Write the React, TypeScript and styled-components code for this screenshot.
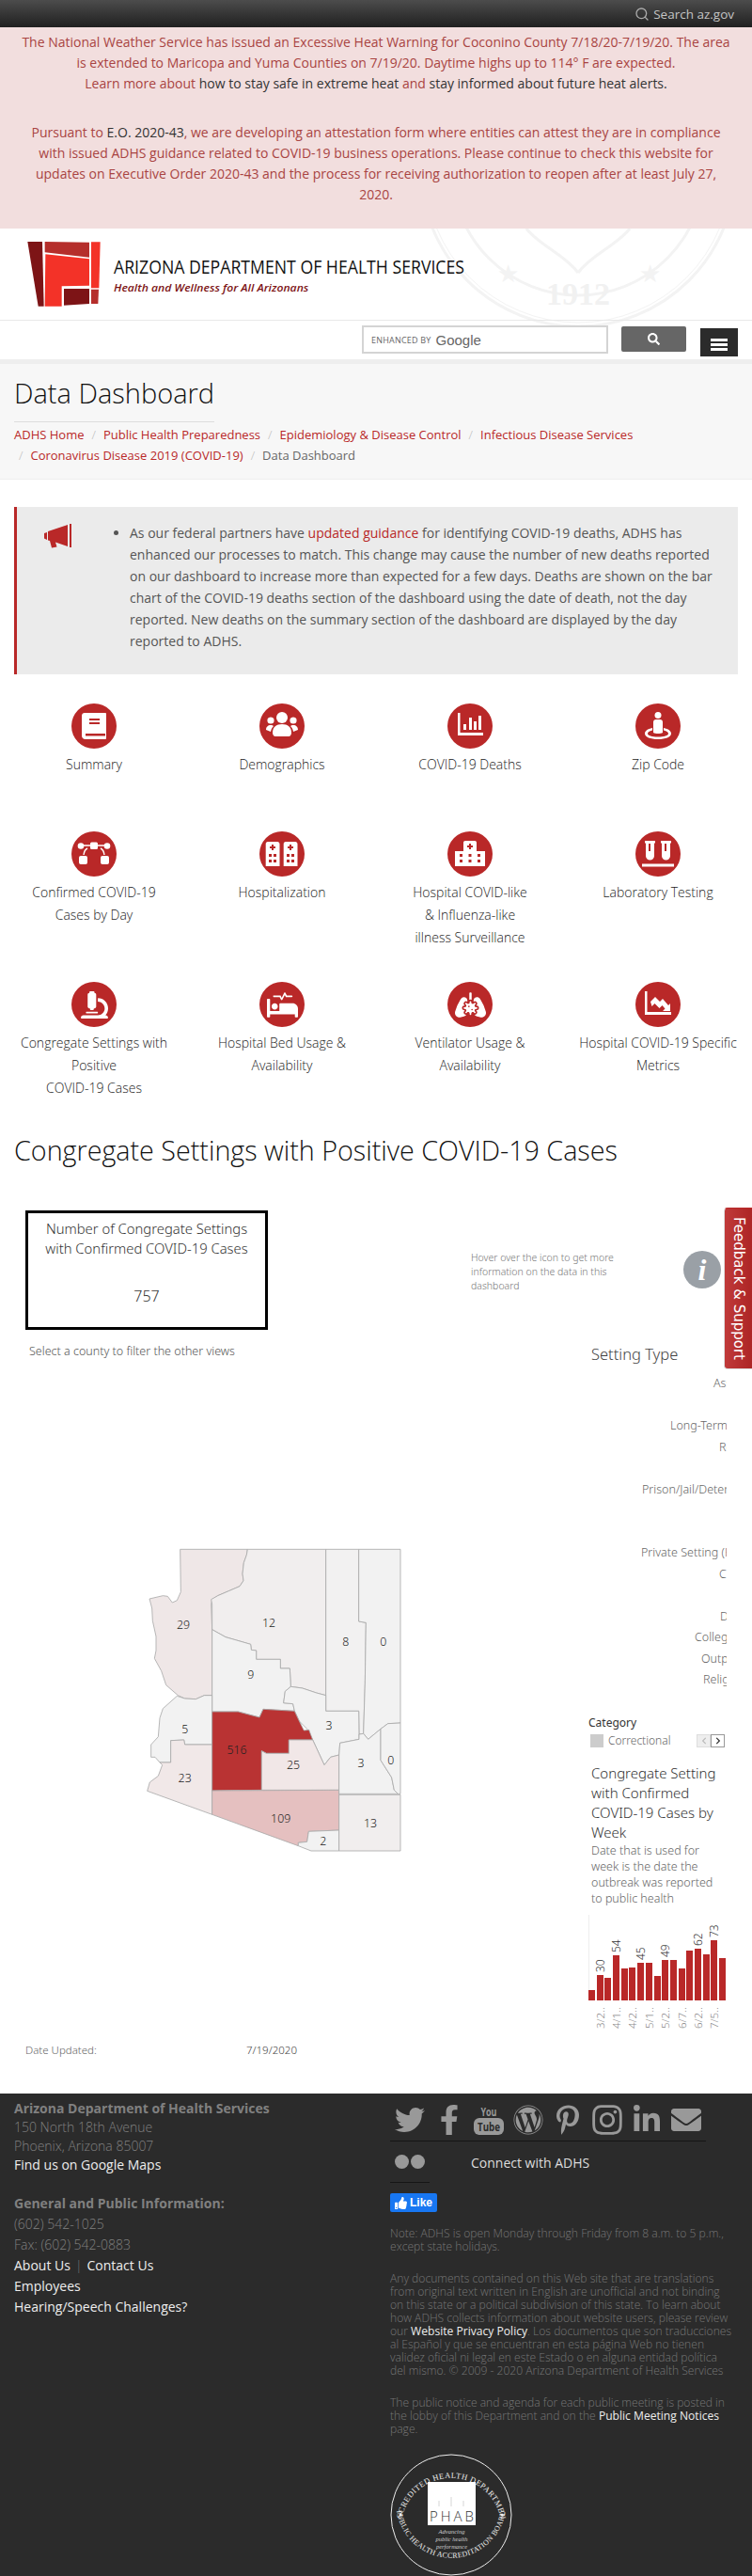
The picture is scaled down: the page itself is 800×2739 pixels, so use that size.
import React from "react";
import styled, { createGlobalStyle } from "styled-components";
import { Search } from "lucide-react";
import {
  FaMicroscope, FaProcedures, FaLungsVirus, FaSearch, FaTwitter, FaFacebookF, FaWordpress,
  FaPinterestP, FaInstagram, FaLinkedinIn, FaEnvelope, FaThumbsUp, FaChevronLeft, FaChevronRight,
} from "react-icons/fa";

const RED = "#b92828";

const GlobalStyle = createGlobalStyle`
  html, body { margin: 0; padding: 0; background: #fff; }
  body { font-family: "Open Sans", "Liberation Sans", sans-serif; color: #333; overflow-x: hidden; }
  a { color: inherit; text-decoration: none; }
`;

const Page = styled.div`
  position: relative;
  width: 800px;
  height: 2739px;
  overflow: hidden;
`;

const TopBar = styled.div`
  height: 29px;
  background: linear-gradient(#4c4c4c, #202020);
  color: #c4c4c4;
  font-size: 13.5px;
  display: flex;
  align-items: center;
  justify-content: flex-end;
  gap: 4px;
  padding-right: 19px;
`;

const AlertBox = styled.div`
  background: #f2dede;
  color: #a94442;
  font-size: 14px;
  line-height: 22px;
  text-align: center;
  white-space: nowrap;
  padding: 5px 15px 25px;
  p { margin: 0 0 30px; }
  p:last-child { margin: 0; }
  a { color: #333; }
`;

const Masthead = styled.div`
  position: relative;
  overflow: hidden;
`;

const SealMark = styled.svg`
  position: absolute;
  left: 440px;
  top: 0;
  pointer-events: none;
`;

const Brand = styled.div`
  position: relative;
  height: 97px;
  svg { display: block; }
`;

const SearchRow = styled.div`
  position: relative;
  height: 41px;
  border-top: 1px solid #e8e8e8;
  display: flex;
  justify-content: flex-end;
  padding-right: 15px;
`;

const GoogleBox = styled.div`
  width: 250px;
  height: 26px;
  margin-top: 5px;
  border: 2px solid #d4d4d4;
  background: #fff;
  display: flex;
  align-items: center;
  padding-left: 8px;
  box-sizing: content-box;
  span { font-size: 9px; color: #666; letter-spacing: 0.2px; margin-right: 5px; }
  b { font: 400 15px "Liberation Sans", sans-serif; color: #666; }
`;

const SearchButton = styled.div`
  width: 69px;
  height: 27px;
  margin: 6px 0 0 14px;
  background: #666;
  border-radius: 2px;
  color: #fff;
  display: flex;
  align-items: center;
  justify-content: center;
`;

const MenuButton = styled.div`
  width: 40px;
  height: 30px;
  margin: 8px 0 0 15px;
  background: #2b2b2b;
  display: flex;
  flex-direction: column;
  justify-content: flex-end;
  align-items: center;
  gap: 2px;
  padding-bottom: 6px;
  box-sizing: border-box;
  i { display: block; width: 18px; height: 3px; background: #fff; }
`;

const TitleBand = styled.div`
  height: 128px;
  box-sizing: border-box;
  background: #f7f7f7;
  border-top: 5px solid #eee;
  border-bottom: 1px solid #eee;
  padding: 11px 15px 0;
`;

const PageTitle = styled.h1`
  display: inline-block;
  margin: 0;
  font-size: 29px;
  font-weight: 300;
  line-height: 40px;
  color: #111;
  padding-bottom: 10px;
  border-bottom: 1px solid #ddd;
`;

const Crumbs = styled.div`
  font-size: 13px;
  line-height: 22px;
  margin-top: 2px;
  color: #666;
  a { color: ${RED}; }
  i { color: #bbb; font-style: normal; padding: 0 8px; font-weight: 300; }
  i.first { padding-left: 5px; }
`;

const Callout = styled.div`
  margin: 29px 15px 0;
  height: 178px;
  box-sizing: border-box;
  background: #ebebeb;
  border-left: 3px solid ${RED};
  padding-top: 15.5px;
  display: flex;
  color: #555;
  font-size: 14px;
  line-height: 23px;
  a { color: ${RED}; }
`;

const Horn = styled.svg`
  flex: none;
  margin: 2px 0 0 26px;
`;

const BulletList = styled.ul`
  margin: 0;
  padding: 0 0 0 62px;
  width: 621px;
  flex: none;
  box-sizing: content-box;
  li { white-space: nowrap; list-style-position: outside; }
`;

const LinkGrid = styled.div`
  display: grid;
  grid-template-columns: repeat(4, 200px);
  margin-top: 31px;
`;

const LinkItem = styled.div`
  min-height: 136px;
  padding-bottom: 35px;
  box-sizing: border-box;
  display: flex;
  flex-direction: column;
  align-items: center;
  text-align: center;
  font-size: 14px;
  font-weight: 300;
  line-height: 24px;
  color: #222;
  white-space: nowrap;
`;

const IconDisc = styled.div`
  width: 48px;
  height: 48px;
  border-radius: 50%;
  background: ${RED};
  color: #fff;
  margin-bottom: 5px;
  display: flex;
  align-items: center;
  justify-content: center;
`;

const SectionTitle = styled.h2`
  margin: 0;
  padding-left: 15px;
  font-size: 28.700px;
  font-weight: 300;
  line-height: 38px;
  color: #111;
  white-space: nowrap;
`;

const Dashboard = styled.div`
  display: grid;
  grid-template-columns: 501px 299px;
  height: 984px;
  font-family: "Noto Sans", "Open Sans", sans-serif;
  font-weight: 300;
`;

const LeftColumn = styled.div`
  padding: 45px 0 0 27px;
`;

const KpiBox = styled.div`
  width: 258px;
  height: 127px;
  box-sizing: border-box;
  border: 3.5px solid #000;
  text-align: center;
  font-size: 14.800px;
  line-height: 21px;
  color: #333;
  padding-top: 6px;
  white-space: nowrap;
  span { display: block; margin-top: 30px; font-size: 16px; }
`;

const SelectHint = styled.div`
  margin: 14px 0 0 4px;
  font-size: 12.500px;
  line-height: 18px;
  color: #555;
`;

const MapFrame = styled.svg`
  display: block;
  margin: 174px 0 0 103px;
`;

const UpdatedRow = styled.div`
  margin-top: 181px;
  display: flex;
  font-size: 11.500px;
  line-height: 18px;
  color: #666;
  span:first-child { width: 235px; }
  span:last-child { color: #444; }
`;

const RightColumn = styled.div`
  padding-top: 88px;
`;

const HoverRow = styled.div`
  height: 45px;
  display: flex;
  width: 266px;
  justify-content: space-between;
`;

const HoverNote = styled.div`
  width: 178px;
  font-size: 10.500px;
  line-height: 15px;
  color: #777;
`;

const InfoDot = styled.div`
  width: 40px;
  height: 40px;
  border-radius: 50%;
  background: #9aa0a6;
  color: #fff;
  font: italic 700 32px/40px "Liberation Serif", serif;
  text-align: center;
`;

const SidePanel = styled.div`
  margin: 53px 0 0 125px;
  width: 147px;
  overflow: hidden;
`;

const SettingTitle = styled.div`
  margin-left: 3px;
  font-size: 16.500px;
  line-height: 24px;
  color: #444;
`;

const SettingList = styled.div`
  margin-top: 8px;
`;

const SettingRow = styled.div<{ $x: number }>`
  height: 22.500px;
  line-height: 22.500px;
  margin-left: ${(p) => p.$x}px;
  font-size: 12.500px;
  color: #666;
  white-space: nowrap;
`;

const LegendTitle = styled.div`
  margin-top: 26px;
  font-size: 12px;
  font-weight: 400;
  line-height: 16px;
  color: #333;
`;

const LegendRow = styled.div`
  margin: 4px 2px 0 2px;
  height: 14px;
  display: flex;
  align-items: center;
  font-size: 12px;
  color: #666;
`;

const Swatch = styled.i`
  width: 14px;
  height: 14px;
  background: #ccc;
  margin-right: 5px;
`;

const Pager = styled.div`
  margin-left: auto;
  display: flex;
`;

const PageBtn = styled.div<{ $on?: boolean }>`
  width: 13px;
  height: 12px;
  border: 1px solid ${(p) => (p.$on ? "#999" : "#ddd")};
  background: ${(p) => (p.$on ? "#fff" : "#eee")};
  color: ${(p) => (p.$on ? "#333" : "#bbb")};
  display: flex;
  align-items: center;
  justify-content: center;
`;

const ChartTitle = styled.div`
  margin: 17.500px 0 0 3px;
  font-size: 15px;
  line-height: 21px;
  color: #333;
  white-space: nowrap;
`;

const ChartNote = styled.div`
  margin-left: 3px;
  font-size: 12.500px;
  line-height: 17px;
  color: #666;
  white-space: nowrap;
`;

const WeekChart = styled.svg`
  display: block;
  margin-top: 3.500px;
`;

const FeedbackTab = styled.div`
  position: absolute;
  left: 770px;
  top: 1284px;
  width: 30px;
  height: 172px;
  box-sizing: border-box;
  background: linear-gradient(90deg, #c03a3a, #ad2525);
  border: 1px solid #ddd;
  border-right: none;
  border-top-color: #b92828;
  border-radius: 4px 0 0 4px;
  color: #fff;
  font: 15px "DejaVu Sans", sans-serif;
  writing-mode: vertical-rl;
  display: flex;
  align-items: center;
  justify-content: center;
  white-space: nowrap;
`;

const Footer = styled.footer`
  height: 513px;
  background: #2b2b2b;
  display: grid;
  grid-template-columns: 415px 385px;
  font-size: 14px;
  color: #808080;
  a { color: #eee; }
`;

const FooterLeft = styled.div`
  padding: 6px 0 0 15px;
  font-weight: 300;
`;

const AddressLine = styled.div`
  line-height: 20px;
  b { font-weight: 700; }
  a { font-weight: 400; }
`;

const InfoBlock = styled.div`
  margin-top: 20px;
`;

const InfoLine = styled.div`
  line-height: 22px;
  white-space: nowrap;
  b { font-weight: 700; }
  a { font-weight: 400; }
  i { font-style: normal; color: #777; padding: 0 5px; }
`;

const FooterRight = styled.div`
  padding-top: 12px;
  width: 370px;
`;

const SocialRow = styled.div`
  width: 336px;
  height: 38px;
  display: grid;
  grid-template-columns: repeat(8, 42px);
  border-bottom: 1px solid #151515;
  color: #999;
  div { display: flex; justify-content: center; height: 32px; align-items: center; }
`;

const ConnectRow = styled.div`
  display: flex;
  height: 44px;
  align-items: center;
  color: #ddd;
  font-size: 14px;
`;

const FlickrCell = styled.div`
  width: 42px;
  height: 44px;
  box-sizing: border-box;
  border-bottom: 1px solid #151515;
  margin-right: 44px;
  display: flex;
  align-items: center;
  justify-content: center;
  gap: 2px;
  i { width: 15px; height: 15px; border-radius: 50%; background: #999; }
`;

const LikeButton = styled.div`
  width: 50px;
  height: 20px;
  margin-top: 11px;
  background: #1877f2;
  border-radius: 2px;
  color: #fff;
  font: 700 12px "Liberation Sans", sans-serif;
  display: flex;
  align-items: center;
  justify-content: center;
  gap: 3px;
`;

const Fine = styled.p<{ $top: number }>`
  margin: ${(p) => p.$top}px 0 0;
  font-size: 12.100px;
  line-height: 14px;
  color: #777;
  font-weight: 300;
  white-space: nowrap;
  a { font-weight: 400; color: #eee; }
`;

const PhabSeal = styled.svg`
  display: block;
  margin-top: 19px;
`;

function Logo() {
  return (
    <svg width="520" height="97" viewBox="0 0 1560 291">
      <polygon points="88,42 135,42 140,248 122,248" fill="#7d1416" />
      <polygon points="143,42 285,44 285,92 143,76" fill="#b52e2b" />
      <polygon points="145,82 285,97 285,182 197,184 197,248 143,248" fill="#f33228" />
      <polygon points="204,192 285,192 285,240 204,245" fill="#7d1416" />
      <polygon points="291,43 320,43 316,190 291,190" fill="#f33228" />
      <polygon points="291,194 315,194 313,240 291,240" fill="#b52e2b" />
      <text x="363" y="143" fontFamily="Open Sans" fontSize="62" fill="#111" textLength="1119" lengthAdjust="spacingAndGlyphs">
        ARIZONA DEPARTMENT OF HEALTH SERVICES
      </text>
      <text x="363" y="200" fontFamily="Open Sans" fontSize="34" fontStyle="italic" fontWeight="600" fill="#7d1416" textLength="622" lengthAdjust="spacingAndGlyphs">
        Health and Wellness for All Arizonans
      </text>
    </svg>
  );
}

// faint state seal behind the masthead
function Seal() {
  const c = "#f3f3f3";
  return (
    <SealMark width="360" height="104" viewBox="440 243 360 104">
      <circle cx="615" cy="180" r="167" fill="none" stroke={c} strokeWidth="3" />
      <circle cx="615" cy="180" r="163" fill="none" stroke={c} strokeWidth="1" />
      <circle cx="615" cy="180" r="134" fill="none" stroke={c} strokeWidth="3" />
      <text x="540" y="300" fontSize="26" fill={c} textAnchor="middle">★</text>
      <text x="691" y="300" fontSize="26" fill={c} textAnchor="middle">★</text>
      <text x="615" y="324" fontFamily="Liberation Serif" fontSize="34" fontWeight="700" fill="#f1f1f1" textAnchor="middle" textLength="68" lengthAdjust="spacingAndGlyphs">1912</text>
      <path d="M 615,290 C 600,270 575,262 560,243 M 615,290 C 630,270 655,262 670,243" fill="none" stroke={c} strokeWidth="3" />
    </SealMark>
  );
}

const Glyph = ({ children }: { children: React.ReactNode }) => (
  <svg width="48" height="48" viewBox="0 0 48 48" fill="#fff">{children}</svg>
);

const icons: Record<string, React.ReactNode> = {
  book: (
    <Glyph>
      <path d="M14 10h22a1 1 0 0 1 1 1v26a1 1 0 0 1-1 1H15c-2.500 0-4-1.500-4-4V13c0-1.700 1.300-3 3-3z" />
      <path d="M19 16h11v2H19zM19 20h11v2H19zM15 32h21v2.500H15z" fill={RED} />
    </Glyph>
  ),
  people: (
    <Glyph>
      <circle cx="24" cy="15" r="6" />
      <circle cx="12" cy="18" r="3.600" />
      <circle cx="36" cy="18" r="3.600" />
      <path d="M14 31c0-6 4-9 10-9s10 3 10 9c0 2-1 4-3 4H17c-2 0-3-2-3-4z" />
      <path d="M7 28c0-3 2-5 5-5 1.500 0 2.500.5 3 1-1.500 1.500-2.500 3-3 6zM41 28c0-3-2-5-5-5-1.500 0-2.500.5-3 1 1.500 1.500 2.500 3 3 6z" />
    </Glyph>
  ),
  bars: (
    <Glyph>
      <path d="M11 10h2.500v21H38v3H11z" />
      <path d="M17 22h3v6h-3zM23 15h3v13h-3zM28 19h3v9h-3zM33 13h3v15h-3z" />
    </Glyph>
  ),
  person: (
    <Glyph>
      <circle cx="24" cy="12.500" r="3.500" />
      <path d="M10 32c0-2.800 3-5 8-6v2.500c-3.300.7-5 2-5 3.500 0 2 4.500 3.500 11 3.500s11-1.500 11-3.500c0-1.500-1.700-2.800-5-3.500V26c5 1 8 3.200 8 6 0 3.800-6 6-14 6s-14-2.200-14-6z" />
      <path d="M19 20c0-2 1-3 3-3h4c2 0 3 1 3 3v11c-1.300.7-2.800 1-5 1s-3.700-.3-5-1z" />
    </Glyph>
  ),
  flow: (
    <Glyph>
      <rect x="20" y="11.500" width="8" height="7.500" rx="1.500" />
      <circle cx="10" cy="15.500" r="3.300" />
      <circle cx="38" cy="15.500" r="3.300" />
      <rect x="8" y="26" width="9" height="9" rx="2" />
      <rect x="31" y="26" width="9" height="9" rx="2" />
      <path d="M13 15h7M28 15h7M17 18c-2 1-3.500 3-4 7M31 18c2 1 3.500 3 4 7" fill="none" stroke="#fff" strokeWidth="1.400" />
    </Glyph>
  ),
  twin: (
    <Glyph>
      <path d="M9 11h10c1.500 0 2.500 1 2.500 2.500V37H6.700V13.500C6.700 12 7.500 11 9 11zM28 11h10c1.500 0 2.500 1 2.500 2.500V37H25.700V13.500c0-1.500.8-2.500 2.300-2.500z" />
      <path fill={RED} d="M13 14h2v2h2v2h-2v2h-2v-2h-2v-2h2zM32 14h2v2h2v2h-2v2h-2v-2h-2v-2h2zM10 24h3v3h-3zM15 24h3v3h-3zM10 30h3v3h-3zM15 30h3v3h-3zM29 24h3v3h-3zM34 24h3v3h-3zM29 30h3v3h-3zM34 30h3v3h-3z" />
    </Glyph>
  ),
  clinic: (
    <Glyph>
      <path d="M19 10h10c1.200 0 2 .8 2 2v9h9v16H8V21h9v-9c0-1.200.8-2 2-2z" />
      <path fill={RED} d="M23 13h2v2h2v2h-2v2h-2v-2h-2v-2h2zM13 24h3v3h-3zM22.500 24h3v3h-3zM32 24h3v3h-3zM13 30h3v3h-3zM22.500 30h3v3h-3zM32 30h3v3h-3z" />
    </Glyph>
  ),
  tubes: (
    <Glyph>
      <path d="M10 10h11v2.500h-1V26a4.500 4.500 0 0 1-9 0V12.500h-1zM27 10h11v2.500h-1V26a4.500 4.500 0 0 1-9 0V12.500h-1z" />
      <path d="M14 13h2v8h-2zM31 13h2v8h-2z" fill={RED} />
      <path d="M7 34.500h34V37.500H7z" />
    </Glyph>
  ),
  trend: (
    <Glyph>
      <path d="M10 10h2.500v22H38v3H10z" />
      <path d="M16 21l5-5 5 5 3-3 6 7 2-2v8h-8l2.500-2.500-3-3.500-3 3-5-5-3 3z" />
    </Glyph>
  ),
};

const links = [
  { icon: icons.book, text: ["Summary"] },
  { icon: icons.people, text: ["Demographics"] },
  { icon: icons.bars, text: ["COVID-19 Deaths"] },
  { icon: icons.person, text: ["Zip Code"] },
  { icon: icons.flow, text: ["Confirmed COVID-19", "Cases by Day"] },
  { icon: icons.twin, text: ["Hospitalization"] },
  { icon: icons.clinic, text: ["Hospital COVID-like", "& Influenza-like", "illness Surveillance"] },
  { icon: icons.tubes, text: ["Laboratory Testing"] },
  { icon: <FaMicroscope size={29} />, text: ["Congregate Settings with", "Positive", "COVID-19 Cases"] },
  { icon: <FaProcedures size={33} />, text: ["Hospital Bed Usage &", "Availability"] },
  { icon: <FaLungsVirus size={33} />, text: ["Ventilator Usage &", "Availability"] },
  { icon: icons.trend, text: ["Hospital COVID-19 Specific", "Metrics"] },
];

const counties = [
  { fill: "#efe7e7", pts: "185,82 400,82 397,100 388,125 384,160 387,182 375,200 340,215 305,230 287,242 284,258 287,338 287,548 262,548 235,560 200,558 178,548 140,515 125,470 103,430 108,405 108,360 97,310 95,270 87,240 130,230 145,232 160,252 175,245 187,218" },
  { fill: "#f1eeee", pts: "400,82 650,82 650,548 620,540 575,525 538,520 535,462 505,462 505,433 428,433 428,405 412,403 410,385 365,372 330,362 287,338 287,258 284,242 305,230 340,215 375,200 387,182 384,160 388,125 397,100" },
  { fill: "#f2f1f1", pts: "650,82 755,82 755,312 778,316 775,510 770,670 756,672 755,598 650,598" },
  { fill: "#f2f2f2", pts: "755,82 888,82 888,636 848,638 825,655 785,688 770,670 775,510 778,316 755,312" },
  { fill: "#f2f2f2", pts: "287,338 330,362 365,372 410,385 412,403 428,405 428,433 505,433 505,462 535,462 538,520 520,535 515,572 545,575 550,598 450,592 438,618 370,600 287,600" },
  { fill: "#f2f2f2", pts: "538,520 575,525 620,540 650,548 650,598 755,598 756,688 695,700 692,738 665,745 645,770 608,690 590,655 565,630 550,598 545,575 515,572 520,535" },
  { fill: "#f2f2f2", pts: "175,550 200,558 235,560 262,548 287,548 287,705 200,705 197,690 155,692 155,762 120,762 105,745 92,745 92,705 115,680 120,620 130,590" },
  { fill: "#f1e8e8", pts: "155,692 197,690 200,705 287,705 287,928 80,853 88,825 115,805 128,770 120,762 155,762" },
  { fill: "#b93333", pts: "287,600 370,600 438,618 450,592 550,598 565,630 580,660 596,658 608,690 532,690 532,733 460,733 445,725 445,850 287,852" },
  { fill: "#f1e7e7", pts: "532,690 608,690 645,770 665,745 692,738 692,850 445,850 445,725 460,733 532,733" },
  { fill: "#e5c0c0", pts: "287,852 692,850 692,978 595,982 590,1015 562,1018 562,1028 287,928" },
  { fill: "#f2f2f2", pts: "595,982 692,978 692,1044 603,1044 562,1028 562,1018 590,1015" },
  { fill: "#f1eeee", pts: "692,865 888,865 888,1044 692,1044" },
  { fill: "#f2f2f2", pts: "695,700 756,688 756,672 770,670 785,688 825,655 825,755 860,810 868,850 880,862 692,862 692,738" },
  { fill: "#f2f2f2", pts: "825,655 848,638 888,636 888,862 880,862 868,850 860,810 825,755" },
];

const countyLabels: [string, number, number][] = [
  ["29", 195, 322], ["12", 468, 318], ["8", 713, 376], ["0", 833, 378], ["9", 410, 481],
  ["5", 200, 655], ["3", 660, 643], ["516", 366, 721], ["25", 546, 771], ["3", 762, 763],
  ["0", 857, 754], ["23", 200, 811], ["109", 506, 942], ["2", 641, 1012], ["13", 792, 955],
];

const settings: [string, number][] = [
  ["Assisted Living", 133], ["", 0], ["Long-Term Care", 87], ["Residential", 139], ["", 0],
  ["Prison/Jail/Detention", 57], ["", 0], ["", 0], ["Private Setting (Home)", 56], ["Child Care", 139],
  ["", 0], ["Daycare", 140], ["College", 113], ["Outpatient", 120], ["Religious", 122],
];

const bars = [11, 27, 24, 48, 34, 35, 40, 40, 26, 43, 43, 34, 53, 55, 49, 64, 45];
const barX = [0, 9, 17, 26, 35, 43, 52, 61, 70, 78, 87, 96, 104, 113, 122, 130, 139];
const barValues: Record<number, string> = { 1: "30", 3: "54", 6: "45", 9: "49", 13: "62", 15: "73" };
const barDates: Record<number, string> = { 1: "3/2..", 3: "4/1..", 5: "4/2..", 7: "5/1..", 9: "5/2..", 11: "6/7..", 13: "6/2..", 15: "7/5.." };

function CountyMap() {
  return (
    <MapFrame width="330" height="370" viewBox="0 0 990 1110">
      {counties.map((c, i) => (
        <polygon key={i} points={c.pts} fill={c.fill} stroke="#a9a9a9" strokeWidth="2.500" strokeLinejoin="round" />
      ))}
      {countyLabels.map(([t, x, y], i) => (
        <text key={i} x={x} y={y + 13} fontSize="37" textAnchor="middle" fill="#222" fontFamily="Noto Sans">{t}</text>
      ))}
    </MapFrame>
  );
}

function CasesChart() {
  return (
    <WeekChart width="147" height="140" viewBox="0 0 147 140">
      <line x1="0.500" y1="5" x2="0.500" y2="96" stroke="#eee" />
      {bars.map((h, i) => (
        <rect key={i} x={barX[i]} y={96 - h} width="7" height={h} fill={RED} />
      ))}
      {bars.map((h, i) =>
        barValues[i] ? (
          <text key={i} transform={`translate(${barX[i] + 8},${96 - h - 3}) rotate(-90)`} fontSize="12" fill="#333" fontFamily="Noto Sans">{barValues[i]}</text>
        ) : null
      )}
      {bars.map((_, i) =>
        barDates[i] ? (
          <text key={i} transform={`translate(${barX[i] + 8},126) rotate(-90)`} fontSize="11.500" fill="#888" fontFamily="Noto Sans">{barDates[i]}</text>
        ) : null
      )}
    </WeekChart>
  );
}

function YouTubeMark() {
  return (
    <svg width="32" height="32" viewBox="0 0 32 32">
      <text x="16" y="12" textAnchor="middle" fontSize="13" fontWeight="700" fill="#999" fontFamily="Open Sans" textLength="17" lengthAdjust="spacingAndGlyphs">You</text>
      <rect x="0" y="14" width="32" height="18" rx="6" fill="#999" />
      <text x="16" y="28" textAnchor="middle" fontSize="13" fontWeight="700" fill="#2b2b2b" fontFamily="Open Sans" textLength="24" lengthAdjust="spacingAndGlyphs">Tube</text>
    </svg>
  );
}

function Accreditation() {
  return (
    <PhabSeal width="130" height="130" viewBox="0 0 130 130">
      <defs>
        <path id="phabTop" d="M 12,72 A 53.500 53.500 0 0 1 118,72" />
        <path id="phabBottom" d="M 7,60 A 58.500 58.500 0 0 0 123,60" />
      </defs>
      <circle cx="65" cy="65" r="64" fill="none" stroke="#eee" strokeWidth="1" />
      <text fontFamily="Liberation Serif" fontSize="8.500" fill="#eee" letterSpacing="0.500">
        <textPath href="#phabTop" startOffset="50%" textAnchor="middle">ACCREDITED HEALTH DEPARTMENT</textPath>
      </text>
      <text fontFamily="Liberation Serif" fontSize="8" fill="#eee" letterSpacing="0.300">
        <textPath href="#phabBottom" startOffset="50%" textAnchor="middle">PUBLIC HEALTH ACCREDITATION BOARD</textPath>
      </text>
      <circle cx="11" cy="65" r="1.500" fill="#eee" />
      <circle cx="119" cy="65" r="1.500" fill="#eee" />
      <rect x="40" y="30" width="51" height="46" fill="#fff" />
      <path d="M52 50v6M65 46v10M78 50v6" stroke="#bbb" strokeWidth="0.600" />
      <text x="65.500" y="72" textAnchor="middle" fontFamily="Open Sans" fontWeight="300" fontSize="15" fill="#333" textLength="47" lengthAdjust="spacing">PHAB</text>
      <g fontFamily="Liberation Serif" fontStyle="italic" fontSize="6.500" fill="#ccc" textAnchor="middle">
        <text x="65.500" y="85">Advancing</text>
        <text x="65.500" y="93">public health</text>
        <text x="65.500" y="101">performance</text>
      </g>
    </PhabSeal>
  );
}

export default function App() {
  return (
    <Page>
      <GlobalStyle />
      <TopBar>
        <Search size={16} color="#aaa" />
        <span>Search az.gov</span>
      </TopBar>

      <AlertBox>
        <p>
          The National Weather Service has issued an Excessive Heat Warning for Coconino County 7/18/20-7/19/20. The area<br />
          is extended to Maricopa and Yuma Counties on 7/19/20. Daytime highs up to 114° F are expected.<br />
          Learn more about <a>how to stay safe in extreme heat</a> and <a>stay informed about future heat alerts.</a>
        </p>
        <p>
          Pursuant to <a>E.O. 2020-43</a>, we are developing an attestation form where entities can attest they are in compliance<br />
          with issued ADHS guidance related to COVID-19 business operations. Please continue to check this website for<br />
          updates on Executive Order 2020-43 and the process for receiving authorization to reopen after at least July 27,<br />
          2020.
        </p>
      </AlertBox>

      <Masthead>
        <Seal />
        <Brand><Logo /></Brand>
        <SearchRow>
          <GoogleBox><span>ENHANCED BY</span><b>Google</b></GoogleBox>
          <SearchButton><FaSearch size={13} /></SearchButton>
          <MenuButton><i /><i /><i /></MenuButton>
        </SearchRow>
      </Masthead>

      <TitleBand>
        <PageTitle>Data Dashboard</PageTitle>
        <Crumbs>
          <a>ADHS Home</a><i>/</i><a>Public Health Preparedness</a><i>/</i><a>Epidemiology &amp; Disease Control</a><i>/</i><a>Infectious Disease Services</a><br />
          <i className="first">/</i><a>Coronavirus Disease 2019 (COVID-19)</a><i>/</i>Data Dashboard
        </Crumbs>
      </TitleBand>

      <Callout>
        <Horn width="32" height="26" viewBox="0 0 32 26">
          <path d="M30 0h2v25h-2zM7 8l21-7v23L15 19.500l1.500 5-5.500 1-2-7.500-2-.5z" fill={RED} />
          <path d="M3 10l3-1v8l-3-1.500z" fill={RED} />
        </Horn>
        <BulletList>
          <li>
            As our federal partners have <a>updated guidance</a> for identifying COVID-19 deaths, ADHS has<br />
            enhanced our processes to match. This change may cause the number of new deaths reported<br />
            on our dashboard to increase more than expected for a few days. Deaths are shown on the bar<br />
            chart of the COVID-19 deaths section of the dashboard using the date of death, not the day<br />
            reported. New deaths on the summary section of the dashboard are displayed by the day<br />
            reported to ADHS.
          </li>
        </BulletList>
      </Callout>

      <LinkGrid>
        {links.map((l, i) => (
          <LinkItem key={i}>
            <IconDisc>{l.icon}</IconDisc>
            {l.text.map((t) => <div key={t}>{t}</div>)}
          </LinkItem>
        ))}
      </LinkGrid>

      <SectionTitle>Congregate Settings with Positive COVID-19 Cases</SectionTitle>

      <Dashboard>
        <LeftColumn>
          <KpiBox>
            Number of Congregate Settings<br />with Confirmed COVID-19 Cases
            <span>757</span>
          </KpiBox>
          <SelectHint>Select a county to filter the other views</SelectHint>
          <CountyMap />
          <UpdatedRow><span>Date Updated:</span><span>7/19/2020</span></UpdatedRow>
        </LeftColumn>
        <RightColumn>
          <HoverRow>
            <HoverNote>Hover over the icon to get more information on the data in this dashboard</HoverNote>
            <InfoDot>i</InfoDot>
          </HoverRow>
          <SidePanel>
            <SettingTitle>Setting Type</SettingTitle>
            <SettingList>
              {settings.map(([t, x], i) => <SettingRow key={i} $x={x}>{t}</SettingRow>)}
            </SettingList>
            <LegendTitle>Category</LegendTitle>
            <LegendRow>
              <Swatch />Correctional
              <Pager>
                <PageBtn><FaChevronLeft size={8} /></PageBtn>
                <PageBtn $on><FaChevronRight size={8} /></PageBtn>
              </Pager>
            </LegendRow>
            <ChartTitle>Congregate Setting<br />with Confirmed<br />COVID-19 Cases by<br />Week</ChartTitle>
            <ChartNote>Date that is used for<br />week is the date the<br />outbreak was reported<br />to public health</ChartNote>
            <CasesChart />
          </SidePanel>
        </RightColumn>
      </Dashboard>

      <Footer>
        <FooterLeft>
          <AddressLine><b>Arizona Department of Health Services</b></AddressLine>
          <AddressLine>150 North 18th Avenue</AddressLine>
          <AddressLine>Phoenix, Arizona 85007</AddressLine>
          <AddressLine><a>Find us on Google Maps</a></AddressLine>
          <InfoBlock>
            <InfoLine><b>General and Public Information:</b></InfoLine>
            <InfoLine>(602) 542-1025</InfoLine>
            <InfoLine>Fax: (602) 542-0883</InfoLine>
            <InfoLine><a>About Us</a><i>|</i><a>Contact Us</a></InfoLine>
            <InfoLine><a>Employees</a></InfoLine>
            <InfoLine><a>Hearing/Speech Challenges?</a></InfoLine>
          </InfoBlock>
        </FooterLeft>
        <FooterRight>
          <SocialRow>
            <div><FaTwitter size={32} /></div>
            <div><FaFacebookF size={32} /></div>
            <div><YouTubeMark /></div>
            <div><FaWordpress size={32} /></div>
            <div><FaPinterestP size={32} /></div>
            <div><FaInstagram size={36} /></div>
            <div><FaLinkedinIn size={32} /></div>
            <div><FaEnvelope size={32} /></div>
          </SocialRow>
          <ConnectRow>
            <FlickrCell><i /><i /></FlickrCell>
            Connect with ADHS
          </ConnectRow>
          <LikeButton><FaThumbsUp size={13} />Like</LikeButton>
          <Fine $top={16}>Note: ADHS is open Monday through Friday from 8 a.m. to 5 p.m.,<br />except state holidays.</Fine>
          <Fine $top={20}>
            Any documents contained on this Web site that are translations<br />
            from original text written in English are unofficial and not binding<br />
            on this state or a political subdivision of this state. To learn about<br />
            how ADHS collects information about website users, please review<br />
            our <a>Website Privacy Policy</a>. Los documentos que son traducciones<br />
            al Español y que se encuentran en esta página Web no tienen<br />
            validez oficial ni legal en este Estado o en alguna entidad política<br />
            del mismo. © 2009 - 2020 Arizona Department of Health Services
          </Fine>
          <Fine $top={20}>
            The public notice and agenda for each public meeting is posted in<br />
            the lobby of this Department and on the <a>Public Meeting Notices</a><br />
            page.
          </Fine>
          <Accreditation />
        </FooterRight>
      </Footer>

      <FeedbackTab>Feedback &amp; Support</FeedbackTab>
    </Page>
  );
}
